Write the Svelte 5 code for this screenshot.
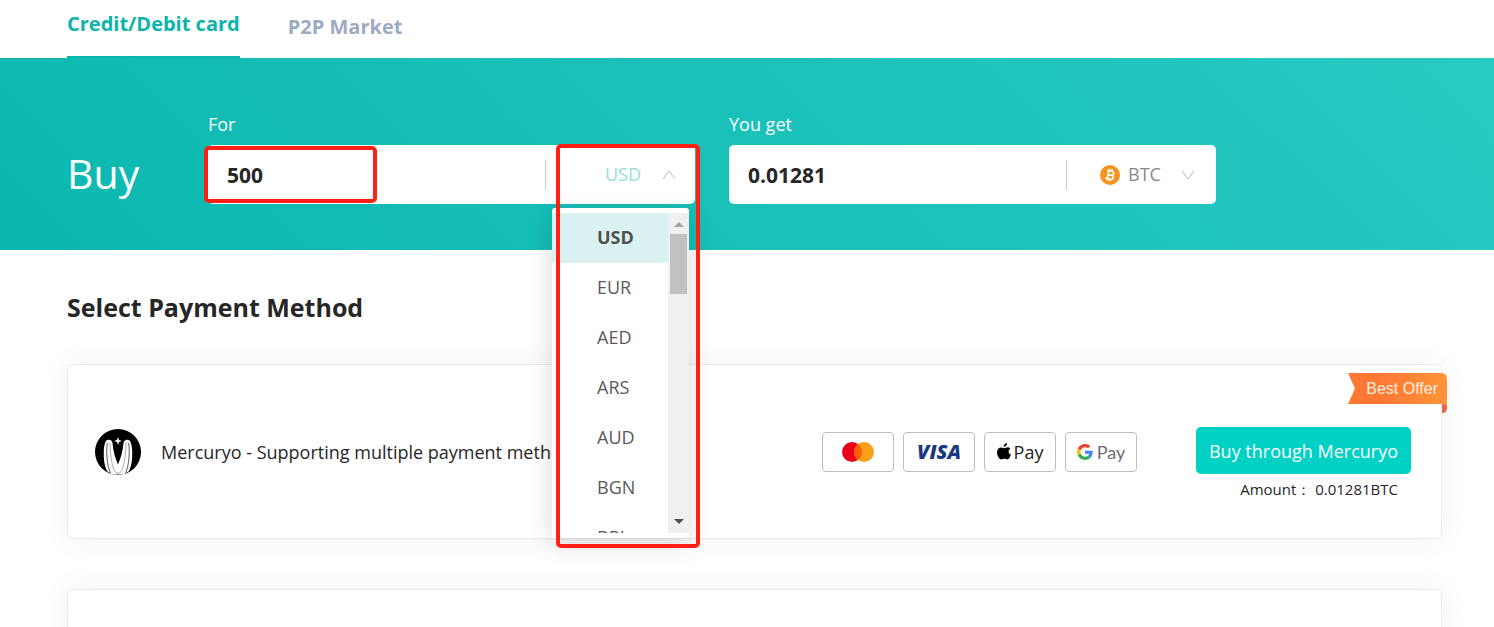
<script>
  const currencies = ['USD', 'EUR', 'AED', 'ARS', 'AUD', 'BGN', 'BRL']
  let amount = $state('500')
  let currency = $state('USD')
  let open = $state(true)
  let tab = $state('card')

  function toggle(e) {
    e.preventDefault()
    open = !open
  }

  function pick(c) {
    currency = c
    open = false
  }
</script>

<svelte:head>
  <title>Buy crypto</title>
</svelte:head>

<div class="page">
  <nav class="tabs">
    <a href="#card" class:active={tab === 'card'} onclick={() => (tab = 'card')}>Credit/Debit card</a>
    <a href="#p2p" class:active={tab === 'p2p'} onclick={() => (tab = 'p2p')}>P2P Market</a>
  </nav>

  <section class="banner">
    <h1>Buy</h1>
    <div class="field">
      <label for="amount">For</label>
      <div class="box">
        <input id="amount" type="text" bind:value={amount} />
        <div class="currency from">
          <select aria-label="Currency" bind:value={currency} onmousedown={toggle}>
            {#each currencies as c}
              <option>{c}</option>
            {/each}
          </select>
          <svg class="arrow" viewBox="0 0 14 10"><path d="M1 9 7 1l6 8" /></svg>
          {#if open}
            <div class="dropdown">
              <div class="options" role="listbox" aria-label="Currencies">
                {#each currencies as c}
                  <button role="option" aria-selected={c === currency} class:selected={c === currency} onclick={() => pick(c)}>{c}</button>
                {/each}
              </div>
              <div class="scrollbar">
                <svg viewBox="0 0 10 5"><path d="M0 5 5 0l5 5z" fill="#a3a3a3" /></svg>
                <div class="thumb"></div>
                <svg viewBox="0 0 10 5"><path d="M0 0h10L5 5z" fill="#505050" /></svg>
              </div>
            </div>
          {/if}
          <div class="mark mark-list"></div>
        </div>
        <div class="mark mark-amount"></div>
      </div>
    </div>
    <div class="field">
      <label for="result">You get</label>
      <div class="box">
        <input id="result" type="text" value="0.01281" readonly />
        <div class="currency coin">
          <svg class="btc" viewBox="0 0 20 20">
            <circle cx="10" cy="10" r="10" fill="#f7931a" />
            <g transform="rotate(13 10 10)" fill="none" stroke="#fff" stroke-width="1.6">
              <path d="M6 6h5c3 0 3 3.9 0 3.9H8h3.400c3.200 0 3.200 4.200 0 4.200H6M8 6v8M8.700 3.800V6M11 3.800V6M8.700 14v2.200M11 14v2.200" />
            </g>
          </svg>
          <select aria-label="Coin">
            <option>BTC</option>
          </select>
          <svg class="arrow" viewBox="0 0 14 10"><path d="m1 1 6 8 6-8" /></svg>
        </div>
      </div>
    </div>
  </section>

  <main>
    <h2>Select Payment Method</h2>

    <article class="card">
      <svg class="logo" viewBox="0 0 46 46">
        <circle cx="23" cy="23" r="23" fill="#000" />
        <path d="M8.800 22c.3-6 1.500-10.500 3.700-11 2.500-.6 4.500.5 5 3 .7 8 2.500 14.500 5.500 21.500 3-7 4.800-13.500 5.500-21.500.5-2.500 2.500-3.600 5-3 2.200.5 3.400 5 3.700 11 .3 8-.5 14.500-3.200 20L29 45.500H17L12 42c-2.700-5.500-3.500-12-3.200-20z" fill="#fff" />
        <g fill="none" stroke="#333" stroke-width=".8">
          <path d="M12.300 14c-1.300 11-.3 21.500 3.200 30.500M33.700 14c1.300 11 .3 21.500-3.200 30.500" />
          <path d="M15 13.500c.2 12 1.500 21 4.200 28 1.500 3.500 6.100 3.500 7.600 0 2.700-7 4-16 4.200-28" stroke="#999" />
        </g>
        <path d="m23 8 1 3 3 1-3 1-1 3-1-3-3-1 3-1z" fill="#fff" />
      </svg>
      <p class="name">Mercuryo - Supporting multiple payment methods</p>

      <div class="brands">
        <span class="brand">
          <svg width="32" height="20" viewBox="0 0 32 20" role="img" aria-label="Mastercard">
            <circle cx="10" cy="10" r="10" fill="#eb001b" />
            <circle cx="22" cy="10" r="10" fill="#f9a01b" />
            <path d="M16 2a10 10 0 0 1 0 16 10 10 0 0 1 0-16z" fill="#ff5f00" />
          </svg>
        </span>
        <span class="brand visa">VISA</span>
        <span class="brand apple">
          <svg width="14" height="17" viewBox="0 0 14 17" aria-hidden="true">
            <path d="M10 0c.2 2-1.400 3.900-3.300 3.900C6.500 2 8.200.2 10 0zM13.300 5.800c-2.600 1.600-2.100 5 .7 6-.8 2-2.100 4.600-3.700 4.600-1.200 0-1.500-.7-2.900-.7s-1.800.7-2.900.7C2.200 16.500 0 12.600 0 9.600c0-3.300 2-5.200 4.200-5.200 1.300 0 2.300.8 3.100.8.800 0 2-.9 3.500-.9 1 0 2 .6 2.500 1.500z" fill="#000" />
          </svg>
          <span>Pay</span>
        </span>
        <span class="brand google">
          <svg width="16" height="16" viewBox="0 0 48 48" aria-hidden="true">
            <path fill="#ea4335" d="M24 9.500c3.540 0 6.710 1.220 9.210 3.600l6.850-6.850C35.900 2.380 30.470 0 24 0 14.620 0 6.510 5.380 2.560 13.220l7.980 6.190C12.430 13.720 17.740 9.500 24 9.500z" />
            <path fill="#4285f4" d="M46.980 24.550c0-1.570-.15-3.090-.38-4.550H24v9.020h12.940c-.58 2.960-2.260 5.480-4.780 7.180l7.730 6c4.510-4.180 7.090-10.360 7.090-17.650z" />
            <path fill="#fbbc05" d="M10.530 28.590c-.48-1.450-.76-2.990-.76-4.590s.27-3.140.76-4.590l-7.980-6.190C.92 16.460 0 20.120 0 24s.92 7.540 2.560 10.780l7.970-6.190z" />
            <path fill="#34a853" d="M24 48c6.480 0 11.930-2.130 15.890-5.810l-7.730-6c-2.150 1.450-4.920 2.300-8.160 2.300-6.260 0-11.570-4.220-13.470-9.910l-7.980 6.190C6.510 42.620 14.620 48 24 48z" />
          </svg>
          <span>Pay</span>
        </span>
      </div>

      <div class="action">
        <button>Buy through Mercuryo</button>
        <p>Amount： 0.01281BTC</p>
      </div>

      <div class="ribbon">
        <svg viewBox="0 0 99 40" aria-hidden="true">
          <defs>
            <linearGradient id="offer" x1="0" x2="1">
              <stop offset=".3" stop-color="#ff7733" />
              <stop offset="1" stop-color="#ff9437" />
            </linearGradient>
          </defs>
          <path d="M94 31h5v4q0 5-5 5z" fill="#e5664c" />
          <path d="M0 0h93q6 0 6 6v29q0-4-5-4H0l7-15.500z" fill="url(#offer)" />
        </svg>
        <span>Best Offer</span>
      </div>
    </article>

    <article class="card"></article>
  </main>
</div>

<style>
  :global(body) { background: #fff; }
  .page { height: 100vh; overflow: hidden; display: flex; flex-direction: column; font-family: "Open Sans", "Noto Sans", sans-serif; color: #262626; }
  h1, h2, p { margin: 0; padding: 0; }

  .tabs { display: flex; gap: 48px; height: 58px; padding: 0 67px; flex-shrink: 0; }
  .tabs a { box-sizing: border-box; height: 58px; padding-top: 13px; font-size: 20px; line-height: 28px; font-weight: 700; color: #9cabc2; text-decoration: none; }
  .tabs a.active { padding-top: 10px; color: #0ab5ab; border-bottom: 2px solid #0ab5ab; }

  .banner { display: flex; align-items: flex-end; padding: 54px 67px 46px; background: linear-gradient(45deg, #0ab8b0, #29cac2); flex-shrink: 0; }
  .banner h1 { width: 141px; padding-bottom: 1px; font-size: 41px; line-height: 59px; font-weight: 400; color: #fff; }
  .field { width: 487px; margin-right: 34px; }
  .field label { display: block; margin-bottom: 9px; font-size: 18px; line-height: 24px; color: #fff; }
  .box { position: relative; display: flex; align-items: center; height: 59px; background: #fff; border-radius: 5px; }
  .box input { flex: 1; min-width: 0; padding: 0 19px; border: 0; outline: 0; background: transparent; font: 700 21px "Open Sans", sans-serif; color: #262626; }
  .currency { position: relative; display: flex; align-items: center; box-sizing: border-box; width: 150px; height: 30px; border-left: 1px solid #ccc; }
  .currency select { appearance: none; padding: 0 0 2px; border: 0; background: transparent; font: 18px "Open Sans", sans-serif; color: #888; }
  .from { padding-left: 59px; gap: 18px; }
  .from select { color: #96e0da; }
  .coin { padding-left: 33px; }
  .coin .arrow { margin-left: 20px; }
  .btc { width: 20px; height: 20px; margin-right: 8px; }
  .arrow { width: 14px; height: 10px; fill: none; stroke: #bbb; }

  .dropdown { position: absolute; top: 48px; left: 6px; z-index: 2; box-sizing: border-box; display: flex; width: 137px; height: 330px; padding: 5px 0; background: #fff; border-radius: 3px; box-shadow: 0 5px 25px rgba(0, 0, 0, 0.15); }
  .options { flex: 1; overflow: hidden; }
  .options button { display: block; width: 100%; height: 50px; padding: 0 0 2px 45px; border: 0; background: #fff; font: 18px/48px "Open Sans", sans-serif; text-align: left; color: #595959; }
  .options button.selected { background: #daf3f2; font-weight: 700; color: #505050; }
  .scrollbar { display: flex; flex-direction: column; align-items: center; box-sizing: border-box; width: 21px; padding: 9px 0; background: #f0f0f0; }
  .scrollbar svg { width: 10px; height: 5px; }
  .thumb { width: 17px; height: 60px; margin: 7px 0 auto; background: #c1c1c1; }

  .mark { position: absolute; z-index: 3; box-sizing: border-box; border: 4px solid #ff2015; border-radius: 5px; pointer-events: none; }
  .mark-amount { top: 1px; left: -4px; width: 173px; height: 57px; }
  .mark-list { top: -16px; left: 10px; width: 144px; height: 404px; }

  main { padding: 39px 52px 0 67px; }
  h2 { margin-bottom: 39px; font-size: 25px; line-height: 36px; font-weight: 700; }
  .card { position: relative; display: flex; align-items: center; box-sizing: border-box; height: 175px; margin-bottom: 50px; padding: 0 30px 0 27px; border: 1px solid #ececec; border-radius: 5px; background: #fff; box-shadow: 0 0 30px rgba(0, 0, 0, 0.06); }
  .logo { width: 46px; height: 46px; margin-right: 20px; }
  .name { flex: 1; font-size: 18px; line-height: 24px; white-space: nowrap; }
  .brands { display: flex; gap: 9px; margin-right: 59px; }
  .brand { display: flex; align-items: center; justify-content: center; gap: 3px; box-sizing: border-box; width: 72px; height: 40px; border: 1px solid #bdbdbd; border-radius: 4px; }
  .visa { font-size: 20px; font-weight: 800; font-style: italic; color: #173a80; }
  .apple { font-size: 18px; color: #222; }
  .google { gap: 4px; font-family: Lato, sans-serif; font-size: 18px; color: #6b6e72; }
  .action { padding-top: 24px; text-align: right; }
  .action button { display: block; width: 215px; height: 47px; padding: 0; border: 0; border-radius: 5px; background: #00d1c5; font: 18px "Open Sans", sans-serif; color: #fff; }
  .action p { padding-right: 13px; margin-top: 4px; font-size: 15px; line-height: 22px; }
  .ribbon { position: absolute; top: 8px; right: -6px; width: 99px; height: 40px; }
  .ribbon svg { display: block; width: 99px; height: 40px; }
  .ribbon span { position: absolute; top: 0; right: 9px; font: 16px/31px "Liberation Sans", sans-serif; color: #ffeee0; }
</style>
